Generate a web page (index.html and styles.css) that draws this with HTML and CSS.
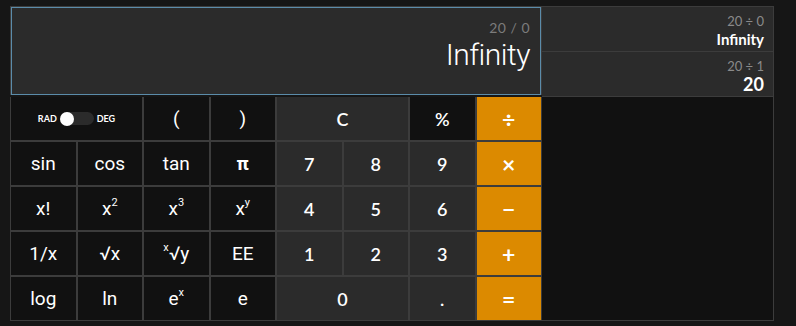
FILE: index.html
```html
<!DOCTYPE html>
<html lang="en">
<head>
    <meta charset="UTF-8">
    <title>Calculator</title>
    <link rel="stylesheet" href="styles.css">
</head>
<body>
    <div class="calc">
        <div class="main">
            <div class="screen">
                <div class="expr">20 / 0</div>
                <div class="result">Infinity</div>
            </div>

            <div class="keys">
                <div class="key fn wide toggle">
                    <span>RAD</span>
                    <span class="switch"><span class="knob"></span></span>
                    <span>DEG</span>
                </div>
                <div class="key fn">(</div>
                <div class="key fn">)</div>
                <div class="key num wide">C</div>
                <div class="key num dark">%</div>
                <div class="key op">÷</div>

                <div class="key fn">sin</div>
                <div class="key fn">cos</div>
                <div class="key fn">tan</div>
                <div class="key fn bold">π</div>
                <div class="key num">7</div>
                <div class="key num">8</div>
                <div class="key num">9</div>
                <div class="key op">×</div>

                <div class="key fn">x!</div>
                <div class="key fn">x<span class="sup">2</span></div>
                <div class="key fn">x<span class="sup">3</span></div>
                <div class="key fn">x<span class="sup">y</span></div>
                <div class="key num">4</div>
                <div class="key num">5</div>
                <div class="key num">6</div>
                <div class="key op">−</div>

                <div class="key fn">1/x</div>
                <div class="key fn">√x</div>
                <div class="key fn"><span class="sup">x</span>√y</div>
                <div class="key fn">EE</div>
                <div class="key num">1</div>
                <div class="key num">2</div>
                <div class="key num">3</div>
                <div class="key op">+</div>

                <div class="key fn">log</div>
                <div class="key fn">ln</div>
                <div class="key fn">e<span class="sup">x</span></div>
                <div class="key fn">e</div>
                <div class="key num wide">0</div>
                <div class="key num">.</div>
                <div class="key op">=</div>
            </div>
        </div>

        <div class="history">
            <div class="entry">
                <div class="h-expr">20 ÷ 0</div>
                <div class="h-res">Infinity</div>
            </div>
            <div class="entry">
                <div class="h-expr">20 ÷ 1</div>
                <div class="h-res big">20</div>
            </div>
        </div>
    </div>
</body>
</html>
```

FILE: styles.css
```css
body {
    margin: 0;
    background-color: #161616;
    color: #fff;
    font-family: Lato, "Open Sans", sans-serif;
}
.calc {
    display: flex;
    margin: 6px 0 0 10px;
}
.main {
    width: 532px;
}
.screen {
    height: 89px;
    box-sizing: border-box;
    border: 1px solid #3c3c3c;
    border-bottom: none;
    background-color: #2b2b2b;
    box-shadow: inset 0 0 0 1px #5b8caa;
    padding: 12px 11px 0 0;
    text-align: right;
}
.expr {
    color: #7c7c7c;
    font-size: 14px;
    letter-spacing: 0.5px;
}
.result {
    font-family: Roboto, sans-serif;
    font-size: 30px;
    font-weight: 300;
    letter-spacing: -0.5px;
    margin-top: 1px;
}
.keys {
    display: grid;
    grid-template-columns: repeat(8, 1fr);
    grid-auto-rows: 43px;
    gap: 2px;
    margin-top: 2px;
    background-color: #3c3c3c;
    border: 1px solid #3c3c3c;
    border-top: none;
}
.key {
    display: flex;
    align-items: center;
    justify-content: center;
    font-size: 18px;
}
.wide {
    grid-column: span 2;
}
.fn {
    background-color: #111;
    font-family: Roboto, sans-serif;
    font-size: 19px;
}
.num {
    background-color: #2b2b2b;
    font-weight: 600;
    font-size: 18px;
}
.num.dark {
    background-color: #111;
}
.op {
    background-color: #dc8a00;
    font-weight: 700;
    font-size: 23px;
}
.bold {
    font-weight: 700;
}
.sup {
    font-size: 11px;
    position: relative;
    top: -6px;
}
.toggle {
    font-family: Lato, sans-serif;
    font-size: 9px;
    font-weight: 700;
    gap: 3px;
}
.switch {
    width: 34px;
    height: 13px;
    border-radius: 7px;
    background-color: #2b2b2b;
    display: flex;
    align-items: center;
}
.knob {
    width: 14px;
    height: 14px;
    border-radius: 50%;
    background-color: #fff;
}
.history {
    width: 232px;
    height: 315px;
    box-sizing: border-box;
    border: 1px solid #3c3c3c;
    border-left: none;
    background-color: #111;
}
.entry {
    height: 45px;
    box-sizing: border-box;
    border-bottom: 1px solid #3c3c3c;
    background-color: #2b2b2b;
    text-align: right;
    padding: 6px 9px 0 0;
}
.h-expr {
    color: #8a8a8a;
    font-size: 13px;
}
.h-res {
    font-size: 15px;
    font-weight: 700;
    margin-top: 1px;
}
.h-res.big {
    font-size: 18px;
    line-height: 18px;
}
```
